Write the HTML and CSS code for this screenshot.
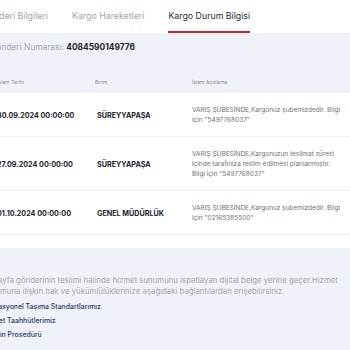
FILE: index.html
```html
<!DOCTYPE html>
<html>
<head>
  <meta charset="UTF-8">
  <meta name="viewport" content="width=device-width, initial-scale=1.0">
  <title>Kargo Durum Bilgisi</title>
  <link rel="stylesheet" href="styles.css">
</head>
<body>
  <div class="page">
    <!-- Tabs -->
    <div class="tabs">
      <div class="tab">Gönderi Bilgileri</div>
      <div class="tab">Kargo Hareketleri</div>
      <div class="tab active">Kargo Durum Bilgisi</div>
    </div>

    <div class="panel">
      <div class="shipment">Gönderi Numarası: <b>4084590149776</b></div>

      <div class="table">
        <div class="row head">
          <div class="cell">İşlem Tarihi</div>
          <div class="cell">Birim</div>
          <div class="cell">İşlem Açıklama</div>
        </div>
        <div class="row">
          <div class="cell date">30.09.2024 00:00:00</div>
          <div class="cell unit">SÜREYYAPAŞA</div>
          <div class="cell desc">VARIŞ ŞUBESİNDE,Kargonuz şubemizdedir. Bilgi<br>için "5497768037"</div>
        </div>
        <div class="row">
          <div class="cell date">27.09.2024 00:00:00</div>
          <div class="cell unit">SÜREYYAPAŞA</div>
          <div class="cell desc">VARIŞ ŞUBESİNDE,Kargonuzun teslimat süresi<br>içinde tarafınıza teslim edilmesi planlanmıştır.<br>Bilgi için "5497768037"</div>
        </div>
        <div class="row">
          <div class="cell date">01.10.2024 00:00:00</div>
          <div class="cell unit">GENEL MÜDÜRLÜK</div>
          <div class="cell desc">VARIŞ ŞUBESİNDE,Kargonuz şubemizdedir. Bilgi<br>için "02165385500"</div>
        </div>
      </div>
      <div class="spacer"></div>
    </div>

    <!-- Footer info -->
    <div class="info">
      <p>Bu sayfa gönderinin teslimi halinde hizmet sunumunu ispatlayan dijital belge yerine geçer.Hizmet<br>sunumuna ilişkin hak ve yükümlülüklerinize aşağıdaki bağlantılardan erişebilirsiniz.</p>
      <a href="#">Operasyonel Taşıma Standartlarımız</a>
      <a href="#">Hizmet Taahhütlerimiz</a>
      <a href="#">Tazmin Prosedürü</a>
    </div>
  </div>
</body>
</html>
```

FILE: styles.css
```css
body {
  margin: 0;
  font-family: Inter, "Noto Sans", sans-serif;
  background: #fff;
  overflow: hidden;
}
.page {
  margin-left: -10px;
  width: 360px;
}
.tabs {
  display: flex;
  gap: 24px;
  height: 33px;
  margin-left: -8px;
  background: #fff;
}
.tab {
  font-size: 8.8px;
  color: #a4a4ae;
  line-height: 31px;
  border-bottom: 2px solid transparent;
  white-space: nowrap;
}
.tab.active {
  color: #2a2a36;
  border-bottom-color: #d3222c;
}
.panel {
  background: #fff;
}
.shipment {
  background: #eff2f9;
  font-size: 8.4px;
  line-height: 10px;
  color: #a4a4b0;
  padding-top: 9px;
  height: 20px;
}
.shipment b {
  color: #23232e;
  font-weight: 700;
}
.table {
  display: flex;
  flex-direction: column;
}
.row {
  display: grid;
  grid-template-columns: 98px 97px 159px;
  align-items: center;
  padding: 12px 0 11px 0;
  border-bottom: 1px solid #f0f0f3;
}
.row.head {
  background: #eff2f9;
  padding: 15px 0 6px 0;
  line-height: 10px;
  border-bottom: none;
  font-size: 5px;
  color: #8a8a96;
}
.cell {
  padding-left: 7px;
}
.date, .unit {
  font-size: 7.2px;
  font-weight: 700;
  color: #22222c;
  white-space: nowrap;
}
.unit {
  padding-left: 9px;
}
.desc {
  font-size: 6.5px;
  line-height: 10px;
  color: #707079;
  white-space: nowrap;
}
.spacer {
  height: 13px;
  border-bottom: 1px solid #f2f2f5;
}
.info {
  background: #eff2f9;
  margin-left: -8px;
  padding: 26px 0 20px 0;
}
.info p {
  margin: 0 0 3px 0;
  font-size: 7.8px;
  line-height: 11px;
  color: #a6a6b0;
  white-space: nowrap;
}
.info a {
  display: block;
  font-size: 6.9px;
  font-weight: 500;
  line-height: 14px;
  color: #2d3a6c;
  text-decoration: none;
}
```
